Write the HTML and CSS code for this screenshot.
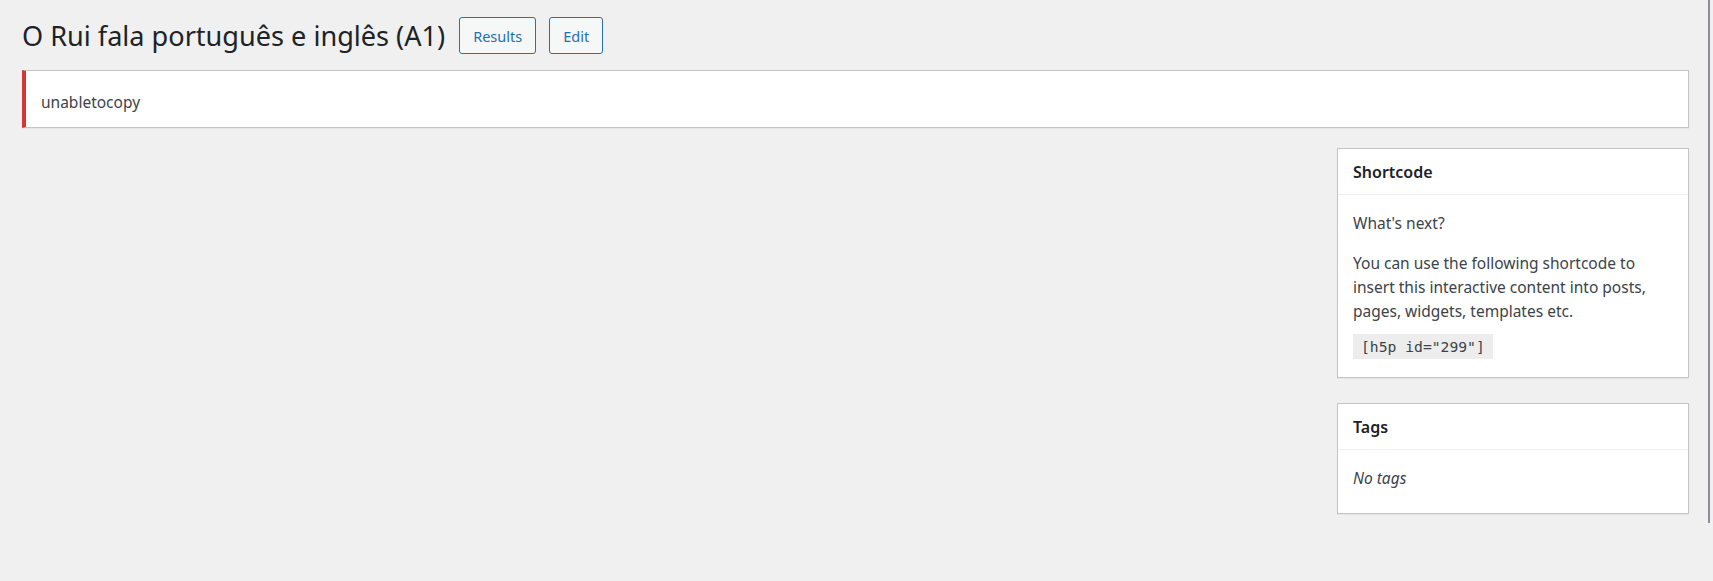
FILE: index.html
```html
<!DOCTYPE html>
<html lang="en">
<head>
<meta charset="utf-8">
<title>O Rui fala português e inglês (A1)</title>
<link rel="stylesheet" href="styles.css">
</head>
<body>
<div class="screen">
  <main class="main">
    <div class="title-row">
      <h1 class="page-title">O Rui fala português e inglês (A1)</h1>
      <a class="title-action" href="#">Results</a>
      <a class="title-action" href="#">Edit</a>
    </div>
    <div class="notice notice-error">
      <p>unabletocopy</p>
    </div>
    <div class="columns">
      <div class="content-col"></div>
      <aside class="sidebar">
        <section class="postbox">
          <h2 class="postbox-title">Shortcode</h2>
          <div class="inside">
            <p>What's next?</p>
            <p>You can use the following shortcode to insert this interactive content into posts, pages, widgets, templates etc.</p>
            <code class="shortcode">[h5p id="299"]</code>
          </div>
        </section>
        <section class="postbox">
          <h2 class="postbox-title">Tags</h2>
          <div class="inside inside-tags">
            <p class="no-tags">No tags</p>
          </div>
        </section>
      </aside>
    </div>
  </main>
  <div class="rail"></div>
</div>
</body>
</html>
```
FILE: styles.css
```css
* { box-sizing: border-box; }
html, body {
  margin: 0;
  padding: 0;
  background: #f0f0f1;
}
body {
  font-family: "Noto Sans", "Open Sans", sans-serif;
  color: #3c434a;
  height: 581px;
  overflow: hidden;
}
.screen {
  display: flex;
  align-items: flex-start;
}
.main {
  flex: 1;
  padding: 17px 19px 0 22px;
}
.rail {
  width: 2px;
  height: 523px;
  background: #8c8f94;
  margin-right: 3px;
}
.title-row {
  display: flex;
  align-items: center;
  height: 37px;
  gap: 13px;
}
.page-title {
  margin: 0 1px 0 0;
  font-size: 27.1px;
  font-weight: 400;
  line-height: 37px;
  color: #1d2327;
}
.title-action {
  display: flex;
  align-items: center;
  height: 37px;
  padding: 0 13px;
  border: 1px solid #2271b1;
  border-radius: 3px;
  background: #f6f7f7;
  color: #2271b1;
  font-size: 14.5px;
  text-decoration: none;
}
.notice {
  margin-top: 16px;
  height: 58px;
  background: #fff;
  border: 1px solid #c3c4c7;
  border-left: 4px solid #d63638;
  box-shadow: 0 1px 1px rgba(0, 0, 0, .04);
  padding: 19px 15px 0;
}
.notice p {
  margin: 0;
  font-size: 15.5px;
  line-height: 24px;
  color: #3c434a;
}
.columns {
  display: flex;
  margin-top: 20px;
}
.content-col { flex: 1; }
.sidebar {
  width: 352px;
  display: flex;
  flex-direction: column;
  gap: 25px;
}
.postbox {
  background: #fff;
  border: 1px solid #c3c4c7;
  box-shadow: 0 1px 1px rgba(0, 0, 0, .04);
}
.postbox-title {
  margin: 0;
  padding: 11px 15px 10px;
  font-size: 16px;
  font-weight: 600;
  line-height: 24px;
  color: #1d2327;
  border-bottom: 1px solid #f0f0f1;
}
.inside {
  padding: 16px 15px 18px;
}
.inside p {
  margin: 0 0 16px;
  font-size: 15.5px;
  line-height: 24px;
  color: #3c434a;
}
.inside p:nth-of-type(2) { margin-bottom: 11px; }
.shortcode {
  display: inline-block;
  height: 25px;
  padding: 0 8px;
  background: #ededed;
  font-family: "DejaVu Sans Mono", "Liberation Mono", monospace;
  font-size: 14.7px;
  line-height: 25px;
  color: #3c434a;
}
.inside-tags { padding-bottom: 23px; }
.inside .no-tags {
  margin: 0;
  font-style: italic;
}
```
